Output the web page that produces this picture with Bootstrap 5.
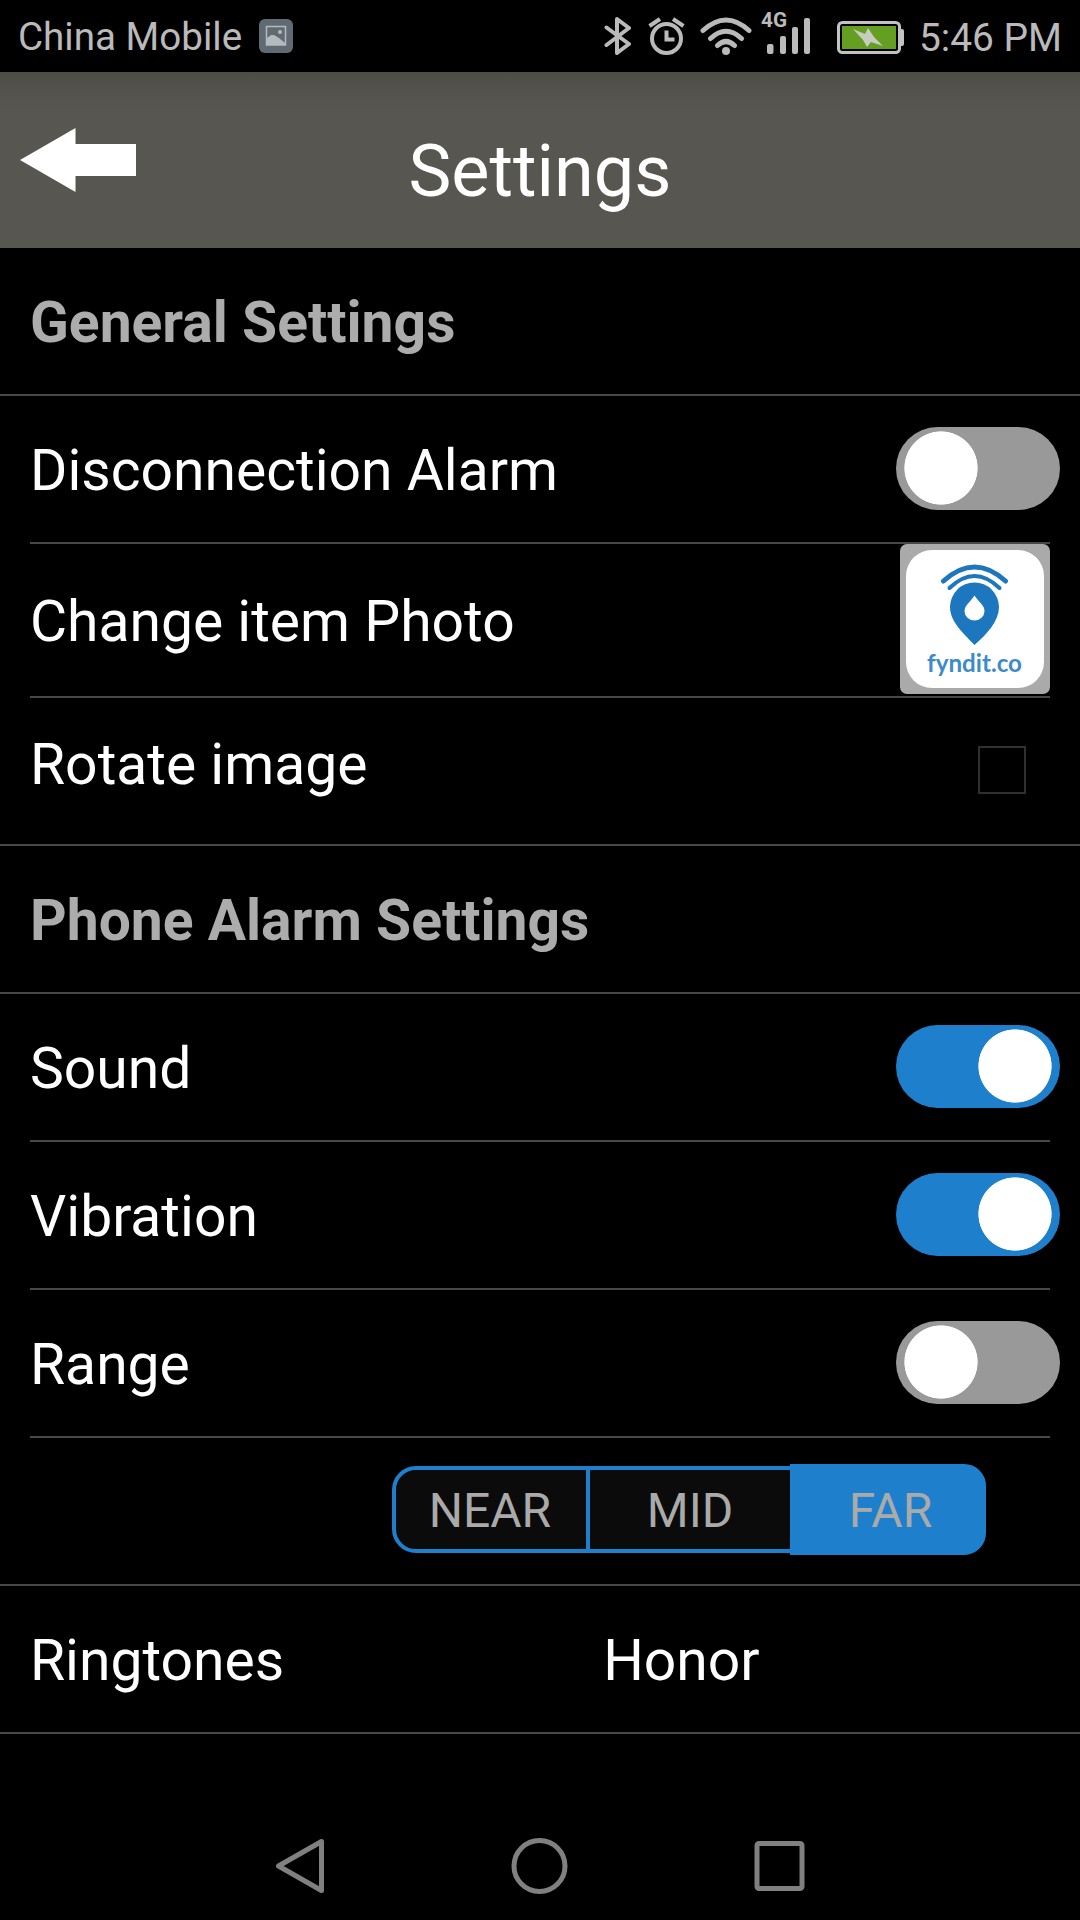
<!DOCTYPE html>
<html lang="en">
<head>
<meta charset="utf-8">
<meta name="viewport" content="width=device-width, initial-scale=1">
<title>Settings</title>
<link rel="stylesheet" href="https://cdn.jsdelivr.net/npm/bootstrap@5.3.0/dist/css/bootstrap.min.css">
<style>
body{background:#000;color:#fff;font-family:Roboto,sans-serif;font-size:57px;line-height:1;height:1920px;overflow:hidden}
svg{display:block;flex:none}
.statusbar{height:72px;padding:0 18px;color:#bababa;font-size:38.6px}
.statusbar .carrier{margin-right:17px;padding-top:3px}
.statusbar .clock{margin-left:15px;padding-top:4px;font-size:38.9px}
.sig-wifi{margin-left:15px}
.sig-cell{margin-left:9px}
.sig-battery{margin-left:26px}
.titlebar{height:176px;background:linear-gradient(#4d4d48,#54534e 20px,#575650 40px);padding-left:20px}
.titlebar h1{font-size:72px;font-weight:400;line-height:1;padding-top:24px}
.titlebar button{width:117px}
.titlebar .side{width:117px;margin-right:20px}
.line{height:148px;border-bottom:2px solid #484848}
.line-full{padding:0 20px 0 30px}
.line-inset{margin:0 30px}
.line .label{padding-top:2px}
.group-title{font-weight:700;color:#acacac;font-size:57px;margin:0;line-height:1;padding-top:2px}
.toggle.form-check-input{width:164px;height:83px;margin:0 -10px 2px 0;border:0;border-radius:42px;background-color:#999;background-size:74px 74px;background-position:8px center;background-repeat:no-repeat;background-image:radial-gradient(circle closest-side,#fff 98%,transparent 100%)}
.toggle.form-check-input:checked{background-color:#1e80cd;background-position:82px center;background-image:radial-gradient(circle closest-side,#fff 98%,transparent 100%)}
.photo-line{height:154px}
.photo{width:150px;height:150px;border-radius:7px;background:#aaa;padding:6px;margin-bottom:2px}
.tick.form-check-input{width:48px;height:48px;margin:0 34px 2px 0;border:2px solid #303030;border-radius:0;background:#000}
.range-line{padding:0 0 3px 390px}
.range-line .btn{width:200px;height:87px;padding:2px 0 0;font-size:48px;color:#aaa;border-radius:0;background:#0b0b0b;border:4px solid #1e80cd;line-height:1;flex:none}
.range-line .near{width:198px;border-radius:24px 0 0 24px;margin-left:2px;padding-right:2px}
.range-line .mid{border-left:0;border-right:0}
.range-line .far{width:196px;height:91px;background:#1e80cd;border-color:#1e80cd;border-radius:0 22px 22px 0;padding-left:5px}
.ringtone{margin-left:319px}
.navkeys{height:186px;padding:78px 275px 0 275px}
</style>
</head>
<body>
<div class="statusbar d-flex align-items-center">
  <span class="carrier">China Mobile</span>
  <svg width="34" height="34" viewBox="0 0 34 34"><rect width="34" height="34" rx="6" fill="#5f6a73"/><rect x="7.5" y="7.500" width="19" height="18.500" fill="none" stroke="#b4babe" stroke-width="1.500"/><circle cx="21" cy="13" r="2" fill="#b4babe"/><path d="M8 19l4-3h3l5 3 6 5v2H8z" fill="#b4babe"/></svg>
  <div class="d-flex ms-auto align-items-center">
    <svg width="28" height="38" viewBox="0 0 28 38" fill="none" stroke="#bababa" stroke-width="4" stroke-linejoin="round" stroke-linecap="round"><path d="M2.500 10.500L25 27 13 36V2L25 11 2.500 28"/></svg>
    <svg class="ms-3" width="37" height="38" viewBox="0 0 37 38" fill="none" stroke="#bababa" stroke-width="4"><circle cx="18.500" cy="21.500" r="14.500"/><path d="M18.500 13.500v9h8M1.500 9L12 2M35.500 9L25 2"/></svg>
    <svg class="sig-wifi" width="52" height="38" viewBox="0 0 52 38" fill="none" stroke="#bababa" stroke-width="5" stroke-linecap="round"><path d="M3 13.500Q26-7.500 49 13.500M10.500 21.500Q26 7 41.500 21.500M17.500 28.500Q26 20.500 34.500 28.500"/><circle cx="26" cy="34" r="4" fill="#bababa" stroke="none"/></svg>
    <svg class="sig-cell" width="50" height="72" viewBox="0 0 50 72" fill="#bababa"><text x="0" y="27" font-family="Roboto" font-weight="700" font-size="20" textLength="26" lengthAdjust="spacingAndGlyphs">4G</text><rect x="6" y="44" width="6.500" height="10" rx="2"/><rect x="19" y="36" width="6" height="18" rx="2"/><rect x="31" y="27" width="6" height="27" rx="2"/><rect x="43" y="18" width="6" height="36" rx="2"/></svg>
    <svg class="sig-battery" width="67" height="72" viewBox="0 0 67 72"><rect x="1.500" y="22.500" width="61" height="30" rx="4" fill="none" stroke="#c2c2c2" stroke-width="3"/><path d="M64 29h1q2 0 2 2v13q0 2-2 2h-1z" fill="#c2c2c2"/><rect x="5" y="26" width="54" height="23" fill="#649f22"/><path d="M16 29l12 5 3-6 6 9 9 9-12-4-4 5-4-7z" fill="#c8ccc0"/></svg>
    <span class="clock">5:46 PM</span>
  </div>
</div>

<header class="titlebar d-flex align-items-center justify-content-between">
  <button class="btn p-0 border-0" aria-label="Back"><svg width="117" height="66" viewBox="0 0 117 66"><path d="M0 33L55.500 1v16H116v32H55.500v16z" fill="#fff"/></svg></button>
  <h1 class="m-0">Settings</h1>
  <div class="side"></div>
</header>

<main>
  <section>
    <div class="line line-full d-flex align-items-center"><h2 class="group-title">General Settings</h2></div>
    <div class="line line-inset d-flex align-items-center justify-content-between"><label class="label" for="disc">Disconnection Alarm</label><input id="disc" class="form-check-input toggle" type="checkbox"></div>
    <div class="line line-inset photo-line d-flex align-items-center justify-content-between"><span class="label">Change item Photo</span>
      <div class="photo"><svg width="138" height="138" viewBox="0 0 138 138"><rect width="138" height="138" rx="26" fill="#fff"/><g fill="none" stroke="#1d77bf" stroke-linecap="round"><path d="M37.500 31Q68.500 3 99.500 31" stroke-width="5"/><path d="M43.500 38Q68.500 14 93.500 38" stroke-width="4"/></g><path d="M68.500 95C56 82 44 71 44 57a24.500 24.500 0 0 1 49 0C93 71 81 84 68.500 95z" fill="#1d77bf"/><path d="M68.500 45.500C64.500 52 58.500 55 58.500 61a10 9.500 0 0 0 20 0C78.500 55 72.500 52 68.500 45.500z" fill="#fff"/><text x="21" y="122" font-family="Lato" font-weight="700" font-size="25" fill="#3d8acb" textLength="95" lengthAdjust="spacingAndGlyphs">fyndit.co</text></svg></div></div>
    <div class="line line-full d-flex align-items-center justify-content-between"><label class="label pb-3" for="rot">Rotate image</label><input id="rot" class="form-check-input tick" type="checkbox"></div>
  </section>
  <section>
    <div class="line line-full d-flex align-items-center"><h2 class="group-title">Phone Alarm Settings</h2></div>
    <div class="line line-inset d-flex align-items-center justify-content-between"><label class="label" for="snd">Sound</label><input id="snd" class="form-check-input toggle" type="checkbox" checked></div>
    <div class="line line-inset d-flex align-items-center justify-content-between"><label class="label" for="vib">Vibration</label><input id="vib" class="form-check-input toggle" type="checkbox" checked></div>
    <div class="line line-inset d-flex align-items-center justify-content-between"><label class="label" for="rng">Range</label><input id="rng" class="form-check-input toggle" type="checkbox"></div>
    <div class="line range-line d-flex align-items-center"><button class="btn near">NEAR</button><button class="btn mid">MID</button><button class="btn far">FAR</button></div>
    <div class="line line-full d-flex align-items-center"><span class="label">Ringtones</span><span class="label ringtone">Honor</span></div>
  </section>
</main>

<nav class="navkeys d-flex justify-content-between" aria-label="System">
  <svg width="50" height="108" viewBox="0 0 50 108" fill="none" stroke="#808080" stroke-width="5" stroke-linejoin="round"><path d="M3.500 54L46.500 29.500v49z"/></svg>
  <svg width="57" height="108" viewBox="0 0 57 108" fill="none" stroke="#808080" stroke-width="5"><circle cx="28.500" cy="54" r="25.500"/></svg>
  <svg width="51" height="108" viewBox="0 0 51 108" fill="none" stroke="#808080" stroke-width="5"><rect x="3" y="31.500" width="45" height="45" rx="2"/></svg>
</nav>
<script src="https://cdn.jsdelivr.net/npm/bootstrap@5.3.0/dist/js/bootstrap.bundle.min.js"></script>
</body>
</html>
